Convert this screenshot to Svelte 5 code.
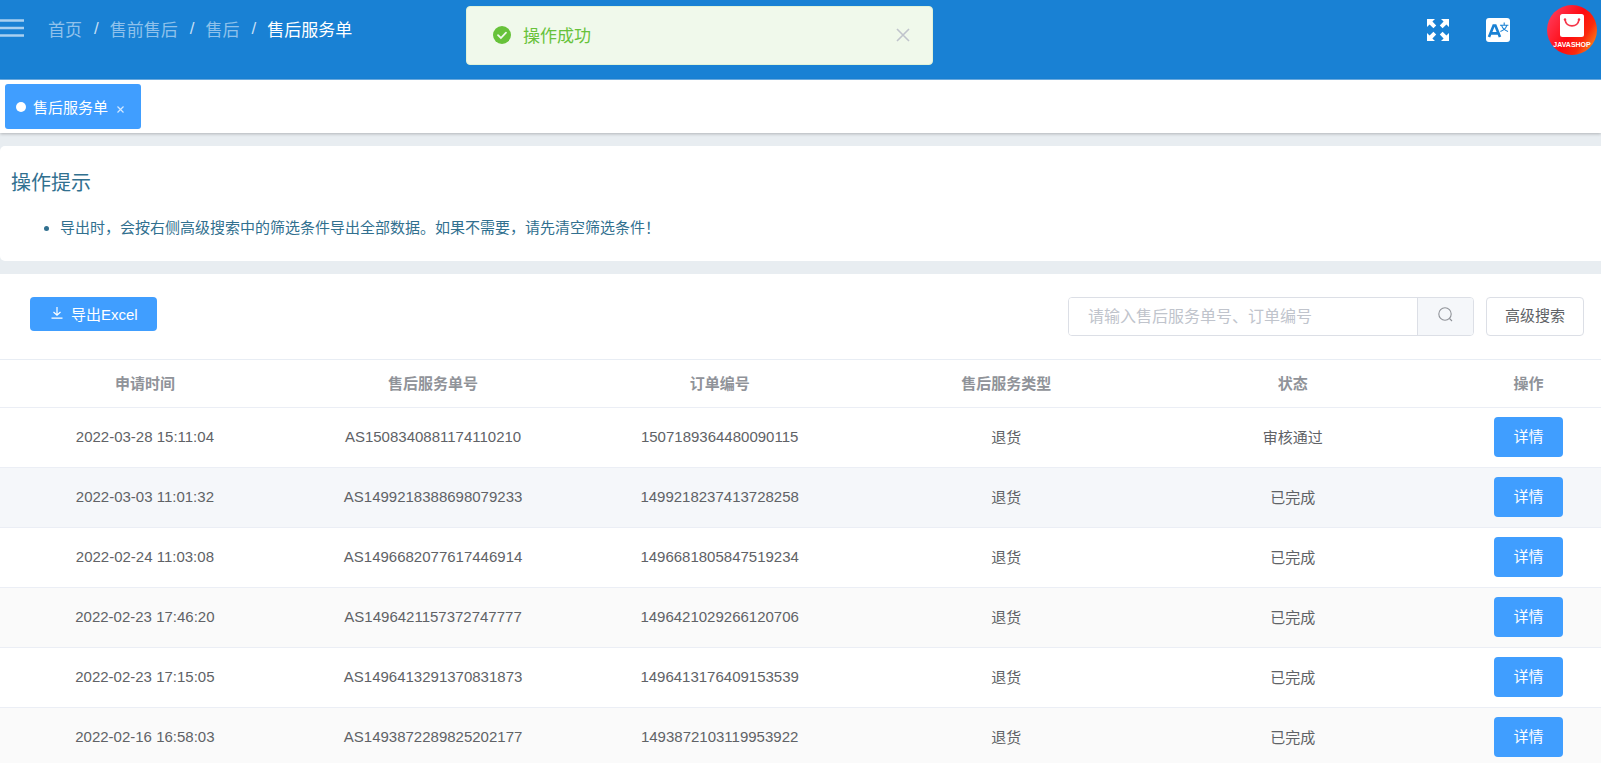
<script lang="ts">
	type Service = {
		time: string;
		sn: string;
		orderSn: string;
		type: string;
		status: string;
	};

	const parents = ['首页', '售前售后', '售后'];
	const columns = ['申请时间', '售后服务单号', '订单编号', '售后服务类型', '状态', '操作'];

	const services: Service[] = [
		{ time: '2022-03-28 15:11:04', sn: 'AS1508340881174110210', orderSn: '1507189364480090115', type: '退货', status: '审核通过' },
		{ time: '2022-03-03 11:01:32', sn: 'AS1499218388698079233', orderSn: '1499218237413728258', type: '退货', status: '已完成' },
		{ time: '2022-02-24 11:03:08', sn: 'AS1496682077617446914', orderSn: '1496681805847519234', type: '退货', status: '已完成' },
		{ time: '2022-02-23 17:46:20', sn: 'AS1496421157372747777', orderSn: '1496421029266120706', type: '退货', status: '已完成' },
		{ time: '2022-02-23 17:15:05', sn: 'AS1496413291370831873', orderSn: '1496413176409153539', type: '退货', status: '已完成' },
		{ time: '2022-02-16 16:58:03', sn: 'AS1493872289825202177', orderSn: '1493872103119953922', type: '退货', status: '已完成' }
	];

	let keyword = $state('');
	let showMessage = $state(true);
	let active = $state(1);
</script>

<div class="page">
	<header class="navbar">
		<button class="icon-btn hamburger" aria-label="菜单">
			<svg width="24" height="18" viewBox="0 0 24 18">
				<path d="M0 1.5h24M0 9h24M0 16.5h24" stroke="#a9d0f0" stroke-width="2.4" />
			</svg>
		</button>
		<nav class="breadcrumb">
			{#each parents as name}
				<a href="#/">{name}</a><span class="separator">/</span>
			{/each}
			<span class="current">售后服务单</span>
		</nav>
		<div class="actions">
			<button class="icon-btn" aria-label="全屏">
				<svg width="22" height="22" viewBox="0 0 22 22" fill="#fff">
					<path id="arrow" d="M0 0h8L5.4 2.6 9.2 6.4 6.4 9.2 2.6 5.4 0 8z" />
					<use href="#arrow" transform="translate(22 0) scale(-1 1)" />
					<use href="#arrow" transform="translate(0 22) scale(1 -1)" />
					<use href="#arrow" transform="translate(22 22) scale(-1 -1)" />
				</svg>
			</button>
			<button class="icon-btn" aria-label="语言">
				<svg width="24" height="24" viewBox="0 0 24 24">
					<rect width="24" height="24" rx="3" fill="#fff" />
					<path d="M3 19 7.6 7.5h1.8L14 19M4.8 15.4h7.4" fill="none" stroke="#1981d4" stroke-width="2.6" />
					<path
						d="M14 7.2h8.4M18.2 4.6v2.4M15.6 7.4c1 3.2 3.2 5 6.4 6M20.8 7.4c-1 3.2-3.2 5-6.4 6"
						fill="none"
						stroke="#1981d4"
						stroke-width="1.1"
					/>
				</svg>
			</button>
			<button class="icon-btn" aria-label="账户">
				<svg width="50" height="50" viewBox="0 0 50 50">
					<defs>
						<linearGradient id="avatar" x1="0" y1="0.2" x2="1" y2="0.8">
							<stop offset="0" stop-color="#ff3b5c" />
							<stop offset="0.5" stop-color="#ff0a10" />
							<stop offset="0.75" stop-color="#fb2a0c" />
							<stop offset="1" stop-color="#f98a1c" />
						</linearGradient>
					</defs>
					<circle cx="25" cy="25" r="25" fill="url(#avatar)" />
					<rect x="13" y="9" width="24" height="23" rx="2.5" fill="#fff" />
					<path d="M18 14.5c1 8.5 13 8.5 14 0" fill="none" stroke="#f5364a" stroke-width="1.8" />
					<circle cx="18" cy="14.5" r="1.2" fill="#f5364a" />
					<circle cx="32" cy="14.5" r="1.2" fill="#f5364a" />
					<text x="25" y="42" text-anchor="middle">JAVASHOP</text>
				</svg>
			</button>
		</div>
	</header>

	{#if showMessage}
		<div class="message" role="alert">
			<svg width="18" height="18" viewBox="0 0 18 18">
				<circle cx="9" cy="9" r="9" fill="#67c23a" />
				<path d="M5 9.2l2.9 2.8L13 6.7" fill="none" stroke="#f0f9eb" stroke-width="1.8" stroke-linecap="round" />
			</svg>
			<p>操作成功</p>
			<button class="icon-btn" aria-label="关闭" onclick={() => (showMessage = false)}>
				<svg width="14" height="14" viewBox="0 0 14 14">
					<path d="M1 1l12 12M13 1L1 13" stroke="#c0c4cc" stroke-width="1.6" />
				</svg>
			</button>
		</div>
	{/if}

	<div class="tags">
		<a class="tag" href="#/service">
			<span class="dot"></span>
			售后服务单
			<svg width="7" height="7" viewBox="0 0 7 7">
				<path d="M0.5 0.5l6 6M6.5 0.5l-6 6" stroke="#d3e8ff" stroke-width="1.2" />
			</svg>
		</a>
	</div>

	<section class="tips">
		<h4>操作提示</h4>
		<ul>
			<li>导出时，会按右侧高级搜索中的筛选条件导出全部数据。如果不需要，请先清空筛选条件！</li>
		</ul>
	</section>

	<main>
		<div class="toolbar">
			<button class="primary export">
				<svg width="12" height="12" viewBox="0 0 12 12">
					<path d="M6 0v8M2.5 5L6 8.3 9.5 5M0.5 11.2h11" fill="none" stroke="#fff" stroke-width="1.2" />
				</svg>
				导出Excel
			</button>
			<form class="search" onsubmit={(e) => e.preventDefault()}>
				<input
					type="text"
					aria-label="搜索"
					placeholder="请输入售后服务单号、订单编号"
					bind:value={keyword}
				/>
				<button aria-label="搜索">
					<svg width="15" height="15" viewBox="0 0 15 15">
						<circle cx="7" cy="7" r="6.2" fill="none" stroke="#909399" stroke-width="1.1" />
						<path d="M11.5 11.5l2.5 2.5" stroke="#909399" stroke-width="1.1" />
					</svg>
				</button>
			</form>
			<button class="advanced">高级搜索</button>
		</div>

		<table>
			<thead>
				<tr>
					{#each columns as column}
						<th>{column}</th>
					{/each}
				</tr>
			</thead>
			<tbody>
				{#each services as row, i}
					<tr class:active={i === active} onmouseenter={() => (active = i)}>
						<td>{row.time}</td>
						<td>{row.sn}</td>
						<td>{row.orderSn}</td>
						<td>{row.type}</td>
						<td>{row.status}</td>
						<td><button class="primary detail">详情</button></td>
					</tr>
				{/each}
			</tbody>
		</table>
	</main>
</div>

<style>
	:global(body) {
		margin: 0;
		background: #e8edf1;
	}

	.page {
		position: relative;
		height: 100vh;
		overflow: hidden;
		background: #e8edf1;
		color: #606266;
		font-family: 'Liberation Sans', 'Noto Sans CJK SC', sans-serif;
		font-size: 15px;
	}

	button,
	input {
		font-family: inherit;
		font-size: 15px;
		box-sizing: border-box;
	}

	button {
		cursor: pointer;
	}

	svg {
		display: block;
		flex: none;
	}

	.icon-btn {
		padding: 0;
		border: none;
		background: none;
	}

	.navbar {
		display: flex;
		align-items: center;
		height: 80px;
		padding: 0 4px 20px 0;
		box-sizing: border-box;
		background: #1981d4;
		border-bottom: 1px solid #6fb0e6;
	}

	.hamburger {
		margin-right: 24px;
		padding-bottom: 4px;
	}

	.breadcrumb {
		display: flex;
		align-items: center;
		padding-bottom: 2px;
		font-size: 17px;
		color: #fff;
	}

	.breadcrumb a {
		color: #8fc1eb;
		text-decoration: none;
	}

	.separator {
		margin: 0 11px 0 12px;
		color: #c5dff5;
	}

	.actions {
		display: flex;
		align-items: center;
		gap: 37px;
		margin-left: auto;
	}

	.actions text {
		fill: #fff;
		font-size: 7px;
		font-weight: bold;
	}

	.message {
		position: absolute;
		top: 6px;
		left: 466px;
		z-index: 1;
		display: flex;
		align-items: center;
		width: 467px;
		height: 59px;
		padding: 0 22px 2px 26px;
		box-sizing: border-box;
		background: #f0f9eb;
		border: 1px solid #e1f3d8;
		border-radius: 4px;
	}

	.message p {
		flex: 1;
		margin: 0 0 0 12px;
		font-size: 17px;
		color: #67c23a;
	}

	.tags {
		display: flex;
		height: 53px;
		padding: 4px 5px;
		box-sizing: border-box;
		background: #fff;
		box-shadow: 0 1px 3px rgba(0, 0, 0, 0.24);
	}

	.tag {
		display: flex;
		align-items: center;
		padding: 0 17px 0 11px;
		border-radius: 3px;
		background: #409eff;
		color: #fff;
		text-decoration: none;
	}

	.dot {
		width: 10px;
		height: 10px;
		margin-right: 7px;
		border-radius: 50%;
		background: #fff;
	}

	.tag svg {
		margin: 5px 0 0 9px;
	}

	.tips {
		height: 115px;
		margin: 13px 0;
		padding: 22px 11px 0;
		box-sizing: border-box;
		background: #fff;
		border-radius: 5px 0 0 5px;
		color: #31708f;
	}

	.tips h4 {
		margin: 0;
		font-size: 20px;
		font-weight: normal;
		line-height: 30px;
	}

	.tips ul {
		margin: 18px 0 0;
		padding-left: 49px;
		line-height: 24px;
	}

	main {
		background: #fff;
	}

	.toolbar {
		display: flex;
		align-items: flex-start;
		height: 85px;
		padding: 23px 17px 0 30px;
		box-sizing: border-box;
	}

	.primary {
		border: none;
		border-radius: 4px;
		background: #409eff;
		color: #fff;
	}

	.export {
		display: flex;
		align-items: center;
		gap: 8px;
		height: 34px;
		padding: 0 19px 2px 21px;
	}

	.search {
		display: flex;
		width: 406px;
		height: 39px;
		margin-left: auto;
		box-sizing: border-box;
		border: 1px solid #dcdfe6;
		border-radius: 4px;
		overflow: hidden;
	}

	.search input {
		flex: 1;
		min-width: 0;
		padding: 0 19px;
		border: none;
		outline: none;
		font-size: 16px;
		color: #606266;
	}

	.search input::placeholder {
		color: #c0c4cc;
	}

	.search button {
		padding: 0 20px 4px;
		border: none;
		border-left: 1px solid #dcdfe6;
		background: #f5f7fa;
	}

	.advanced {
		height: 39px;
		margin-left: 12px;
		padding: 0 18px 4px;
		border: 1px solid #dcdfe6;
		border-radius: 4px;
		background: #fff;
		color: #606266;
	}

	table {
		width: 100%;
		table-layout: fixed;
		border-collapse: separate;
		border-spacing: 0;
		border-top: 1px solid #e8edf4;
	}

	th,
	td {
		height: 60px;
		padding: 0 0 2px;
		box-sizing: border-box;
		border-bottom: 1px solid #ebeef5;
		text-align: center;
	}

	th {
		width: 17.9%;
		height: 48px;
		padding-bottom: 3px;
		color: #909399;
		font-weight: bold;
	}

	th:first-child {
		width: 18.1%;
	}

	th:last-child,
	td:last-child {
		width: auto;
		padding-left: 20px;
	}

	tbody tr:nth-child(even) {
		background: #fafafa;
	}

	tbody tr.active {
		background: #f5f7fa;
	}

	.detail {
		width: 69px;
		height: 40px;
		padding-bottom: 3px;
	}
</style>
